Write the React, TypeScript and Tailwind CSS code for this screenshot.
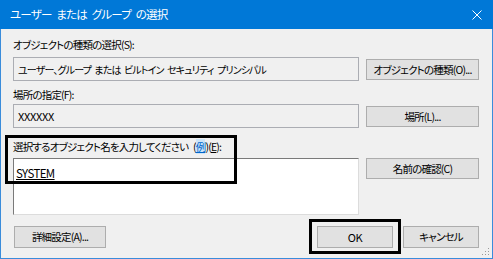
import React from 'react';

const Button: React.FC<{ label: string; className?: string }> = ({ label, className }) => (
  <div
    className={`flex items-center justify-center whitespace-nowrap bg-[#e1e1e1] border border-[#adadad] text-[10.5px] text-black ${className ?? ''}`}
  >
    {label}
  </div>
);

const ReadOnlyBox: React.FC<{ value: string; className?: string }> = ({ value, className }) => (
  <div
    className={`h-[24px] flex items-center pl-[4px] border border-[#abadb3] bg-[#f0f0f0] text-black whitespace-nowrap ${className ?? ''}`}
  >
    {value}
  </div>
);

const Label: React.FC<{ children: React.ReactNode }> = ({ children }) => (
  <div className="h-[16px] leading-[16px] text-[10.5px] text-black whitespace-nowrap">{children}</div>
);

export default function App() {
  return (
    <div className="w-[493px] h-[259px] flex flex-col bg-[#f0f0f0] font-['Noto_Sans_CJK_JP',sans-serif] [font-feature-settings:'palt'] tracking-[-0.8px] [word-spacing:3px] relative">
      {/* title bar */}
      <div className="h-[29px] shrink-0 bg-[#0078d7] flex items-center justify-between pl-[10px] pr-[11px] text-white text-[11.5px]">
        <span>ユーザー または グループ の選択</span>
        <svg width="10" height="10" viewBox="0 0 10 10">
          <path d="M0.5 0.5 L9.5 9.5 M9.5 0.5 L0.5 9.5" stroke="#ffffff" strokeWidth="1" />
        </svg>
      </div>

      {/* body */}
      <div className="flex-1 flex flex-col pl-[12px] pr-[13px] pt-[8px] border-x border-b border-[#3a8cdb] relative">
        <div className="flex gap-[7px] items-start">
          <div className="w-[346px] flex flex-col gap-[4px]">
            <Label>オブジェクトの種類の選択(S):</Label>
            <ReadOnlyBox
              value="ユーザー、グループ または ビルトイン セキュリティ プリンシパル"
              className="text-[10px] tracking-[-0.85px] [word-spacing:2px]"
            />
          </div>
          <Button label="オブジェクトの種類(O)..." className="w-[113px] h-[21px] mt-[22px]" />
        </div>

        <div className="flex gap-[7px] items-start mt-[6px]">
          <div className="w-[346px] flex flex-col gap-[1px]">
            <Label>場所の指定(F):</Label>
            <ReadOnlyBox value="XXXXXX" className="text-[11px] tracking-[-0.3px]" />
          </div>
          <Button label="場所(L)..." className="w-[113px] h-[21px] mt-[19px]" />
        </div>

        <div className="flex gap-[7px] items-start mt-[11px]">
          <div className="w-[346px] flex flex-col gap-[3px]">
            <Label>
              {'選択するオブジェクト名を入力してください ('}
              <span className="bg-[#cce4f7] text-[#0066cc] underline">例</span>
              {')('}
              <span className="underline">E</span>
              {'):'}
            </Label>
            <div className="h-[57px] bg-white border border-t-[#7a7a7a] border-l-[#7a7a7a] border-r-[#dcdcdc] border-b-[#dcdcdc] pl-[2px] pt-[6px] text-[11.5px] leading-[16px] tracking-[-0.6px]">
              <span className="underline text-black">SYSTEM</span>
            </div>
          </div>
          <Button label="名前の確認(C)" className="w-[113px] h-[21px] mt-[19px]" />
        </div>

        <div className="flex items-center mt-[11px]">
          <Button label="詳細設定(A)..." className="w-[92px] h-[22px] ml-[1px]" />
          <div className="flex-1" />
          <Button label="OK" className="w-[76px] h-[22px] text-[11px] tracking-[-0.3px]" />
          <Button label="キャンセル" className="w-[76px] h-[22px] ml-[10px]" />
        </div>

        {/* resize grip */}
        <svg className="absolute right-[2px] bottom-[2px]" width="9" height="9" viewBox="0 0 9 9">
          <rect x="7" y="1" width="1" height="1" fill="#9a9a9a" />
          <rect x="4" y="4" width="1" height="1" fill="#9a9a9a" />
          <rect x="7" y="4" width="1" height="1" fill="#9a9a9a" />
          <rect x="1" y="7" width="1" height="1" fill="#9a9a9a" />
          <rect x="4" y="7" width="1" height="1" fill="#9a9a9a" />
          <rect x="7" y="7" width="1" height="1" fill="#9a9a9a" />
        </svg>
      </div>

      {/* annotation frames */}
      <div className="absolute left-[5px] top-[135px] w-[232px] h-[49px] border-[3px] border-black pointer-events-none" />
      <div className="absolute left-[309px] top-[219px] w-[92px] h-[35px] border-[3px] border-black pointer-events-none" />
    </div>
  );
}
